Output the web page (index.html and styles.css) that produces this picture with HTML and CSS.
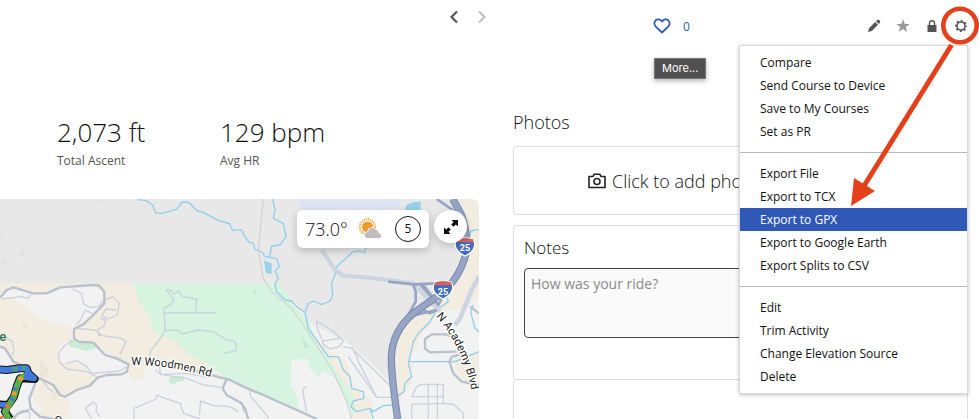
FILE: index.html
```
<!DOCTYPE html>
<html lang="en">
  <head>
    <meta charset="UTF-8" />
    <meta name="viewport" content="width=device-width, initial-scale=1.0" />
    <title>Activity</title>
    <link rel="stylesheet" href="styles.css">
  </head>
  <body>
    <div class="page">
      <main class="activity">
        <nav class="pager">
          <button class="icon-button" aria-label="Previous activity">
            <svg width="10" height="14" viewBox="0 0 10 14"><path d="M8 1.500L2.500 7L8 12.500" fill="none" stroke="#555" stroke-width="2.200" /></svg>
          </button>
          <button class="icon-button" aria-label="Next activity">
            <svg width="10" height="14" viewBox="0 0 10 14"><path d="M2 1.500L7.500 7L2 12.500" fill="none" stroke="#c2c2c2" stroke-width="2.200" /></svg>
          </button>
        </nav>

        <div class="stats">
          <div class="stat">
            <div class="stat-value">2,073 ft</div>
            <div class="stat-label">Total Ascent</div>
          </div>
          <div class="stat">
            <div class="stat-value">129 bpm</div>
            <div class="stat-label">Avg HR</div>
          </div>
        </div>

        <div class="map">
          <svg class="map-canvas" viewBox="0 12 1437 660" preserveAspectRatio="xMinYMin slice">
            <rect y="12" width="1437" height="660" fill="#f2f2f3" />

            <!-- land -->
            <g fill="#f2ede0">
              <path d="M0 265H400L440 355L490 425L545 445L620 505L680 550L640 545L560 520L440 500L430 550L400 555L380 530L390 505L340 482L310 470L280 445L220 435L225 390L290 350L312 330L315 300L280 270L200 275L140 297L60 282L30 280L0 310Z" />
              <path d="M0 310L40 310L90 345L130 375L200 390L220 400L222 430L180 450L172 480L190 500L260 510L270 530L290 545L270 575L195 605L217 640L200 672H110L130 640L90 600L105 555L70 520L30 480L0 450Z" />
              <path d="M320 265H400L450 380L460 410L440 440L430 480L350 440L380 400L405 365L370 355L350 310L320 300Z" />
              <path d="M1385 12H1437V300L1395 345L1340 345L1270 410L1235 480L1235 560L1200 620L1180 600L1170 480L1190 410L1260 350L1350 270L1400 190L1400 90Z" />
              <path d="M840 285L890 320L930 410L985 465L1040 500L1060 570L1120 620L1110 672H1050L1060 610L1000 520L950 460L900 380Z" />
              <path d="M1350 485L1437 475V570L1400 570Z" />
            </g>
            <path d="M0 12H1385L1405 90L1385 200L1330 270L1240 350L1190 395L1170 450L1170 560L1110 500L1040 440L930 385L890 325L830 265H0Z" fill="#e8e8e8" />
            <path d="M890 12H1202L1200 30L1170 60H910Z" fill="#dfe3f4" />
            <g fill="#d6f4e0">
              <path d="M400 265H835L868 305L885 340L925 375L950 450L980 475L1015 540L1060 600L1065 640L1050 672H950L735 578L680 550L620 505L560 475L530 440L490 425L460 405L450 370L415 315Z" />
            </g>
            <path d="M875 495L920 490L932 525L955 545L970 528L1005 548L1025 590L1050 640L1055 672H960L895 640L890 600L873 570Z" fill="#f2f2f3" />
            <path d="M1055 672L1050 640L1025 590L1005 548L1020 545L1060 600L1065 640Z" fill="#d6f4e0" />
            <path d="M207 435L275 440L290 458L260 468L210 455Z" fill="#c9edd2" />
            <path d="M508 545L552 543L550 558L528 560L526 570L506 565Z" fill="#c9edd2" />
            <g fill="#e2e2e2">
              <path d="M70 158L78 172L68 186L50 182Z" />
              <path d="M8 192L24 202L6 208Z" />
              <path d="M603 220L624 218L622 228Z" />
              <path d="M0 118L10 122L0 138Z" />
              <path d="M280 15H308L295 22Z" />
            </g>
            <g fill="#ebe5d5">
              <path d="M70 380L87 400L66 405Z" />
              <path d="M120 490L150 525L120 560Z" />
              <path d="M510 455L528 450L545 458Z" />
              <path d="M150 600L175 590L165 625Z" />
            </g>
            <path d="M905 425L930 455L912 460Z M765 280L770 300L757 298Z" fill="#c8ead4" />

            <!-- water -->
            <g fill="none" stroke="#8fd0ec" stroke-width="4" stroke-linejoin="round">
              <path d="M412 14L436 16L458 30L467 53L485 55L530 43L547 21L566 22L592 48L610 52L650 74L690 87L698 107L724 104L735 125L745 140L760 145L765 163L785 170L795 185L830 190L838 215L825 228L835 250L825 265L830 290L855 315L875 318L890 335L915 352L925 400L960 450L985 485L1015 485L1030 525L1050 545L1055 580L1090 590L1092 610L1060 618L1053 635L1070 650L1110 640L1120 650L1150 632L1180 630L1190 605L1212 590L1215 565L1235 545L1225 505L1240 440L1255 415L1290 380L1310 345L1345 320L1340 305L1355 270" />
              <path d="M818 12L825 45L820 70L850 85L858 125L840 150L815 153L808 188" />
              <path d="M915 352L925 325L940 318L965 328L990 318L998 300L995 265L1007 235L1002 225L1015 210L1060 170L1080 168L1093 173L1098 158" />
              <path d="M1110 640L1120 672M1228 500H1365L1437 470" />
              <path d="M1437 103L1412 108L1405 150L1402 170" />
              <path d="M1420 330L1412 352L1425 400L1437 410" />
            </g>
            <path d="M792 197L815 205V237L798 234Z M1215 42L1220 30L1240 22L1262 20V60H1215Z" fill="#97d2ec" />

            <!-- small streets -->
            <g fill="none" stroke="#ccd1df" stroke-width="4" stroke-linejoin="round">
              <path d="M5 312L65 305L85 310L95 293M218 282L245 295L250 325L268 337L295 335L312 315L340 305L358 325L352 360L325 372L305 362L318 342L348 345M300 370L318 375L310 395L295 402V420L365 430L378 442L360 478M285 360L255 345L240 378L230 385M225 400L285 405L305 420" />
              <path d="M220 435L190 455L175 475L178 500L200 522L260 530L290 545M200 505L230 497L260 515L275 535L360 528L378 515M20 430L38 440L42 470L35 480" />
              <path d="M498 283L520 312L518 325L492 340L495 405L480 432L450 470L448 490M498 283L515 287L520 298L535 287L548 305L590 312L588 350M492 354H650M492 407L530 405L545 417L595 405L640 410L680 435L700 437L710 450L708 467L672 475" />
              <path d="M630 548L560 535L482 538L465 525M478 515L482 538L560 550L610 570L665 577" />
              <path d="M402 672V640L468 612L472 600L490 608L540 625L550 655L600 672M598 660L602 618L640 632L690 635L715 650M256 640L280 622L290 630L288 650L300 665M256 640L275 672M130 560L145 580L160 592M40 665L70 645L90 655L88 672" />
              <path d="M748 580L752 605L800 660L805 672M920 575L910 580L908 590L920 650" />
              <path d="M950 378L995 405L1030 437L1018 455L990 462L970 448L968 438L950 395ZM968 438L1020 430M1030 455L1055 460L1175 577M1045 485L1130 607H1190M1055 455L1070 485L1075 500L1130 607" />
              <path d="M1235 605L1250 575L1265 568H1330V625L1235 628V672M1235 605H1330M1312 568V672M1285 570V672M1330 625L1360 628L1390 655V672" />
            </g>
            <g fill="none" stroke="#ccc" stroke-width="3">
              <path d="M790 12L775 165L790 250L815 290L875 340L930 420L1000 530L1040 620L1055 672" />
            </g>

            <!-- roads -->
            <g fill="none" stroke="#b9c0ce" stroke-width="7" stroke-linejoin="round">
              <path d="M0 308L20 285L40 277L100 295L140 295L180 277L280 270L298 272L313 290V325L280 360L250 388L222 402V430L235 440L280 443L315 480L350 490L386 508L380 530L365 538L320 540L293 548L270 572L230 585L195 605L180 600L160 570L130 555L105 545M0 455L15 460L40 500L65 512M108 555L102 575L88 610L92 640L120 665L160 672M0 650L20 645M40 672L55 655L88 645" />
              <path d="M480 510L560 520L640 542L690 555L735 577L790 600L950 672M680 552L668 580L680 600L725 625L735 650M720 620L735 640L745 672" />
              <path d="M1367 430L1340 418H1295L1275 432V460L1290 472L1370 470M1355 485L1400 475M1355 485L1348 500L1360 535L1385 560L1437 570M1410 335L1437 355" />
            </g>
            <path d="M965 165L1005 225L1030 242L1100 247L1240 265L1320 350" fill="none" stroke="#ced5e2" stroke-width="13" stroke-linejoin="round" />
            <path d="M1437 245L1415 285L1380 370L1365 390" fill="none" stroke="#ced5e2" stroke-width="14" />

            <!-- interstate -->
            <g fill="none" stroke="#97a5c5" stroke-width="8">
              <path d="M1165 260L1240 268L1310 265M1240 270L1247 290V320L1225 360M1262 270L1315 330L1325 310V285M1270 270L1300 310L1260 340L1290 355L1310 345L1225 365M1310 12L1380 60" />
            </g>
            <path d="M1358 12L1382 55Q1402 100 1400 165Q1385 245 1320 298L1240 355Q1175 410 1174 490Q1174 540 1193 672" fill="none" stroke="#7889af" stroke-width="22" />
            <path d="M1358 12L1382 55Q1402 100 1400 165Q1385 245 1320 298L1240 355Q1175 410 1174 490Q1174 540 1193 672" fill="none" stroke="#97a5c5" stroke-width="16" />

            <!-- ride track -->
            <g fill="none" stroke-linejoin="round">
              <path d="M-10 523L20 525L60 520L80 520L85 535L104 552L60 550L50 575L42 605L25 630L-10 628M22 630L15 650L30 672" stroke="#111" stroke-width="24" />
              <path d="M80 540L60 550L50 575L42 605L30 625L15 650L30 680" stroke="#5bae4c" stroke-width="18" />
              <path d="M-10 523L20 525L60 520L80 520L85 535L102 550L72 545" stroke="#4479dc" stroke-width="18" />
              <path d="M-10 628L20 630" stroke="#4479dc" stroke-width="16" />
              <g stroke-width="14">
                <path d="M38 523L52 521M66 520L76 520" stroke="#45a17a" />
                <path d="M67 547L58 555M43 590L41 600" stroke="#f29b35" />
                <path d="M47 577L45 585M38 609L34 616" stroke="#4479dc" />
                <path d="M0 668L8 672M26 630L20 638" stroke="#ed6f32" />
              </g>
            </g>

            <!-- shields -->
            <path d="M1371 132Q1395 125 1419 132Q1430 150 1418 166Q1408 178 1395 183Q1380 177 1371 165Q1360 150 1371 132Z" fill="#456dbe" stroke="#fff" stroke-width="4" />
            <path d="M1371 133Q1395 127 1419 133L1421 142H1369Z" fill="#cf655e" />
            <text class="shield-text" x="1395" y="168">25</text>
            <path d="M1305 261Q1329 254 1353 261Q1364 279 1352 295Q1342 307 1329 312Q1314 306 1305 294Q1294 279 1305 261Z" fill="#456dbe" stroke="#fff" stroke-width="4" />
            <path d="M1305 262Q1329 256 1353 262L1355 271H1303Z" fill="#cf655e" />
            <text class="shield-text" x="1329" y="299">25</text>

            <path id="woodmen" d="M394 510Q510 508 660 554" fill="none" />
            <path id="academy" d="M1308 364Q1388 455 1414 585" fill="none" />
            <text class="road-name"><textPath href="#woodmen">W Woodmen Rd</textPath></text>
            <text class="road-name"><textPath href="#academy">N Academy Blvd</textPath></text>
            <text class="road-name" transform="translate(160 684) rotate(16)">Garden</text>
            <text class="park-name" x="-2" y="438">e</text>
          </svg>

          <div class="weather">
            <span class="temperature">73.0°</span>
            <svg width="24" height="22" viewBox="0 0 24 22">
              <circle cx="8.500" cy="9" r="7.600" fill="none" stroke="#eea63c" stroke-width="2.400" stroke-dasharray="1 1" />
              <circle cx="8.500" cy="9" r="5.500" fill="#f0992b" />
              <path d="M9 20.500a3.500 3.500 0 0 1-.5-7a4.800 4.800 0 0 1 9-1.500a3.200 3.200 0 0 1 2.500 3a2.800 2.800 0 0 1 .5 5.500Z" fill="#bdbdbd" stroke="#fff" stroke-width=".8" />
            </svg>
            <span class="wind">5</span>
          </div>
          <button class="expand" aria-label="Full screen">
            <svg width="14" height="14" viewBox="0 0 14 14">
              <path d="M7.500 0H14V6.500L11.800 4.500L9.500 6.800L7.200 4.500L9.500 2.200ZM6.500 14H0V7.500L2.200 9.500L4.500 7.200L6.800 9.500L4.500 11.800Z" fill="#111" />
            </svg>
          </button>
        </div>
      </main>

      <aside class="sidebar">
        <div class="toolbar">
          <button class="like">
            <svg width="18" height="16" viewBox="0 0 18 16"><path d="M9 14.500L2.800 8.700C.8 6.800 1 3.800 2.700 2.300C4.600.7 7.400 1.200 9 3.500C10.600 1.200 13.400.7 15.300 2.300C17 3.800 17.200 6.800 15.200 8.700Z" fill="none" stroke="#2f59b8" stroke-width="1.800" stroke-linejoin="round" /></svg>
            0
          </button>
          <div class="actions">
            <button class="icon-button" aria-label="Edit">
              <svg width="14" height="14" viewBox="0 0 14 14"><path d="M1 13L2 9.200L8.200 3L11 5.800L4.800 12ZM9 2.200L10.600 .8Q11.300 .3 12 1L13 2Q13.600 2.700 13 3.400L11.800 5Z" fill="#555" /></svg>
            </button>
            <button class="icon-button" aria-label="Favorite">
              <svg width="14" height="14" viewBox="0 0 14 14"><path d="M7 .3L8.800 5H13.700L9.800 8L11.200 13L7 10.100L2.800 13L4.200 8L.3 5H5.200Z" fill="#999" /></svg>
            </button>
            <button class="icon-button" aria-label="Privacy">
              <svg width="14" height="14" viewBox="0 0 14 14"><path d="M2.500 6H11.500V13H2.500Z" fill="#555" /><path d="M4.500 6.500V4Q4.500 1.700 7 1.700T9.500 4V6.500" fill="none" stroke="#555" stroke-width="1.400" /></svg>
            </button>
            <button class="icon-button" aria-label="More">
              <svg width="14" height="14" viewBox="0 0 14 14"><circle cx="7" cy="7" r="4" fill="none" stroke="#555" stroke-width="1.600" /><circle cx="7" cy="7" r="5.200" fill="none" stroke="#555" stroke-width="1.800" stroke-dasharray="1.900 2.184" stroke-dashoffset=".95" /></svg>
            </button>
          </div>

          <div class="tooltip">More...</div>

          <div class="menu">
            <ul class="menu-group">
              <li><a href="#">Compare</a></li>
              <li><a href="#">Send Course to Device</a></li>
              <li><a href="#">Save to My Courses</a></li>
              <li><a href="#">Set as PR</a></li>
            </ul>
            <ul class="menu-group">
              <li><a href="#">Export File</a></li>
              <li><a href="#">Export to TCX</a></li>
              <li><a href="#" class="selected">Export to GPX</a></li>
              <li><a href="#">Export to Google Earth</a></li>
              <li><a href="#">Export Splits to CSV</a></li>
            </ul>
            <ul class="menu-group">
              <li><a href="#">Edit</a></li>
              <li><a href="#">Trim Activity</a></li>
              <li><a href="#">Change Elevation Source</a></li>
              <li><a href="#">Delete</a></li>
            </ul>
          </div>

          <svg class="callout" width="139" height="210" viewBox="840 0 139 210">
            <circle cx="960" cy="25.500" r="16.700" fill="none" stroke="#e5401c" stroke-width="4.600" />
            <path d="M951.500 45L864 186" stroke="#e5401c" stroke-width="5" />
            <path d="M851 206L854 178L875 191Z" fill="#e5401c" />
          </svg>
        </div>

        <h2 class="section-title">Photos</h2>
        <button class="add-photos">
          <svg width="18" height="16" viewBox="0 0 18 16"><path d="M1 3.500H5L6.200 1.200H11.800L13 3.500H17V14.500H1Z" fill="none" stroke="#222" stroke-width="1.600" stroke-linejoin="round" /><circle cx="9" cy="8.500" r="3" fill="none" stroke="#222" stroke-width="1.600" /></svg>
          Click to add photos
        </button>
        <div class="card">
          <label class="card-title" for="notes">Notes</label>
          <textarea id="notes" class="notes" placeholder="How was your ride?"></textarea>
        </div>
        <div class="card-empty"></div>
      </aside>
    </div>
  </body>
</html>
```
FILE: styles.css
```
* {
  box-sizing: border-box;
}

body {
  margin: 0;
  font-family: "Open Sans", sans-serif;
  font-size: 12px;
  color: #111;
  background: #fff;
}

button {
  padding: 0;
  border: none;
  background: none;
  font-family: inherit;
  color: inherit;
}

svg {
  display: block;
  flex: none;
}

.page {
  display: grid;
  grid-template-columns: 479fr 455fr;
  gap: 34px;
  padding-right: 11px;
}

.activity,
.sidebar {
  min-width: 0;
}

.sidebar {
  display: flex;
  flex-direction: column;
}

.pager {
  display: flex;
  justify-content: flex-end;
  gap: 18px;
  height: 34px;
  margin-right: -8px;
}

/* stats */
.stats {
  display: flex;
  padding: 80px 0 0 57px;
  height: 165px;
}

.stat {
  width: 163px;
}

.stat-value {
  font-size: 26px;
  line-height: 36px;
  font-weight: 300;
}

.stat-label {
  line-height: 22px;
  color: #555;
}

/* map */
.map {
  position: relative;
  height: 220px;
  border-radius: 0 8px 0 0;
  overflow: hidden;
}

.map-canvas {
  width: 100%;
  height: 100%;
}

.road-name {
  font-family: Roboto, sans-serif;
  font-size: 34px;
  fill: #222;
  stroke: #fff;
  stroke-width: 8px;
  stroke-linejoin: round;
  paint-order: stroke;
}

.park-name {
  font-family: Roboto, sans-serif;
  font-size: 40px;
  font-weight: 500;
  fill: #2c7a58;
}

.shield-text {
  font-family: Roboto, sans-serif;
  font-size: 27px;
  font-weight: 700;
  fill: #fff;
  text-anchor: middle;
}

.weather {
  position: absolute;
  top: 11px;
  right: 50px;
  display: flex;
  align-items: center;
  justify-content: space-between;
  width: 132px;
  height: 38px;
  padding: 0 8px;
  border-radius: 6px;
  background: #fff;
  box-shadow: 0 3px 8px rgba(0, 0, 0, 0.2);
}

.temperature {
  font-size: 18px;
  line-height: 24px;
  font-weight: 300;
}

.wind {
  width: 26px;
  height: 26px;
  border: 1px solid #111;
  border-radius: 50%;
  line-height: 24px;
  text-align: center;
}

.expand {
  position: absolute;
  top: 11px;
  right: 12px;
  display: grid;
  place-items: center;
  width: 33px;
  height: 33px;
  border-radius: 50%;
  background: #fff;
  box-shadow: 0 3px 8px rgba(0, 0, 0, 0.2);
}

/* toolbar */
.toolbar {
  position: relative;
  display: flex;
  align-items: center;
  justify-content: space-between;
  height: 52px;
  padding-left: 140px;
}

.like {
  display: flex;
  align-items: center;
  gap: 12px;
  font-size: 12px;
  color: #2f59b8;
}

.actions {
  display: flex;
  gap: 15px;
}

.tooltip {
  position: absolute;
  top: 58px;
  left: 141px;
  padding: 0 7px;
  border: 1px solid #777;
  background: #505050;
  box-shadow: 0 2px 5px rgba(0, 0, 0, 0.3);
  font-family: Inter, sans-serif;
  font-size: 11px;
  line-height: 19px;
  color: #fff;
}

.menu {
  position: absolute;
  z-index: 1;
  top: 45px;
  right: 0;
  width: 229px;
  padding: 5px 0;
  border: 1px solid #d8d8d8;
  background: #fff;
  box-shadow: 0 1px 4px rgba(0, 0, 0, 0.25);
}

.menu-group {
  margin: 0;
  padding: 0;
  list-style: none;
}

.menu-group + .menu-group {
  margin-top: 9px;
  padding-top: 9px;
  border-top: 1px solid #b8b8b8;
}

.menu a {
  display: block;
  padding-left: 20px;
  line-height: 23px;
  color: #111;
  text-decoration: none;
}

.menu a.selected {
  background: #3058b6;
  color: #fff;
}

.callout {
  position: absolute;
  z-index: 2;
  top: 0;
  right: -11px;
  pointer-events: none;
}

/* photos and notes */
.section-title {
  margin: 58px 0 12px;
  font-size: 18px;
  line-height: 24px;
  font-weight: 300;
}

.add-photos {
  display: flex;
  align-items: center;
  gap: 6px;
  width: 100%;
  height: 69px;
  margin-bottom: 10px;
  padding-left: 74px;
  border: 1px solid #ddd;
  border-radius: 4px;
  font-size: 18px;
  font-weight: 300;
}

.card {
  height: 155px;
  padding: 10px;
  border: 1px solid #ddd;
  border-radius: 4px;
}

.card-empty {
  flex: 1;
  min-height: 30px;
  border: 1px solid #ddd;
  border-width: 0 1px;
  border-radius: 4px 4px 0 0;
}

.card-title {
  display: block;
  font-size: 17px;
  line-height: 24px;
  font-weight: 300;
}

.notes {
  display: block;
  width: 100%;
  height: 70px;
  margin-top: 8px;
  padding: 5px 6px;
  border: 1px solid #444;
  border-radius: 4px;
  background: #fafafa;
  font-family: inherit;
  font-size: 14px;
  line-height: 20px;
  resize: none;
}

.notes::placeholder {
  color: #8a8a8a;
}
```
